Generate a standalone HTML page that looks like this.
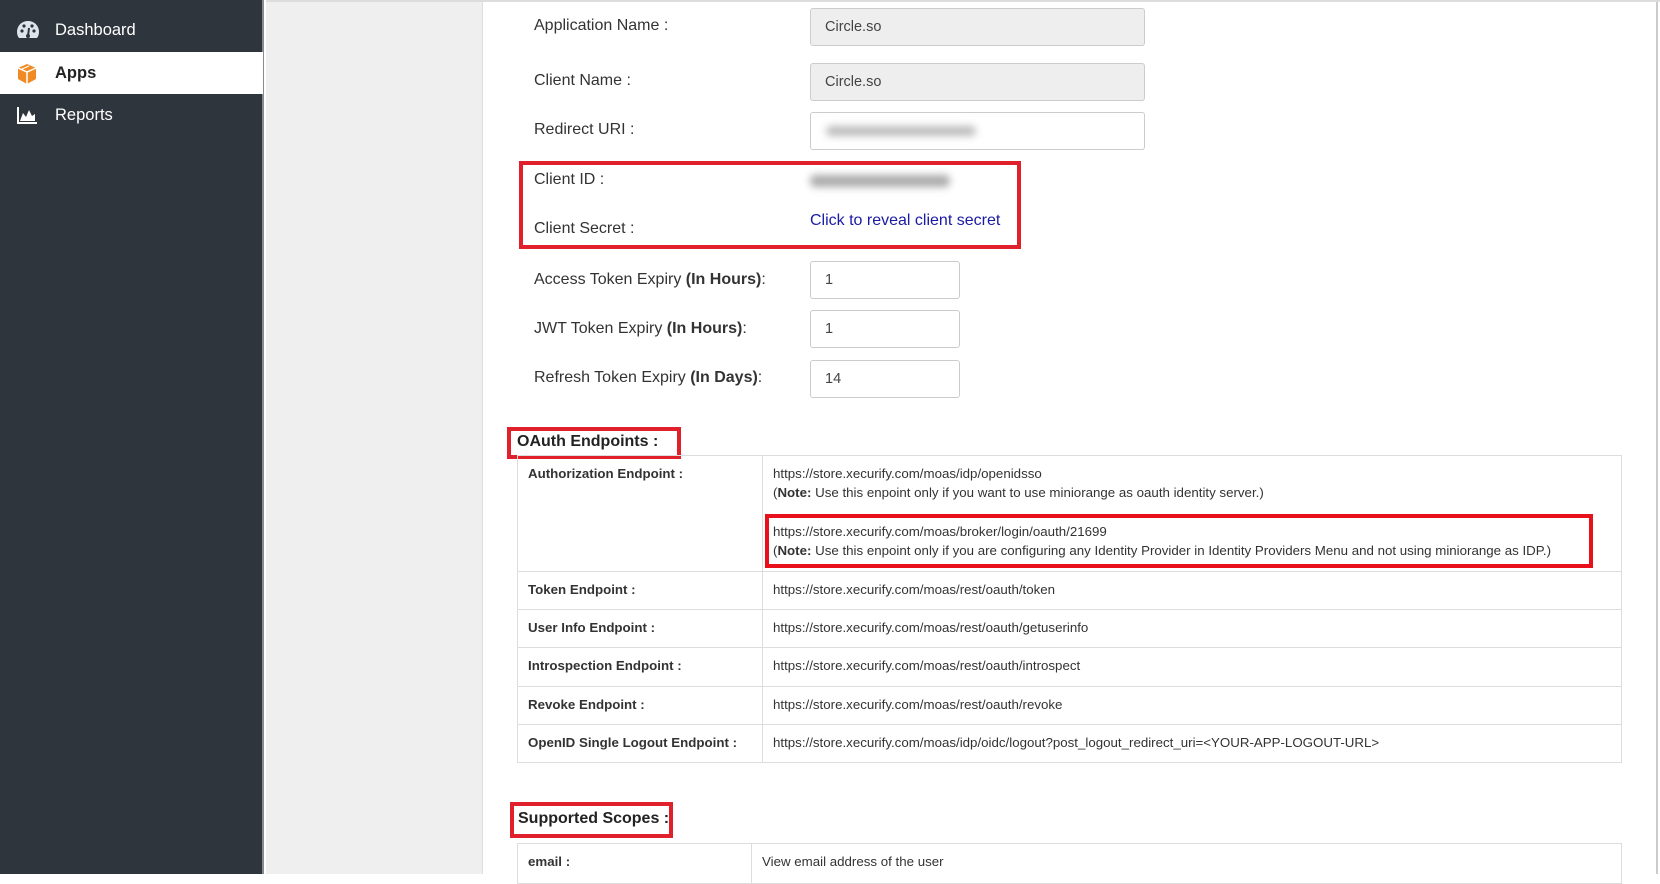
<!DOCTYPE html>
<html><head><meta charset="utf-8"><style>
*{margin:0;padding:0;box-sizing:border-box}
body{width:1660px;height:874px;overflow:hidden;font-family:"Liberation Sans",Arial,sans-serif;background:#fff;position:relative;color:#333}
.sb{position:absolute;left:0;top:0;width:264px;height:874px;background:#2f353c;border-right:2px solid #8a8d90}
.nav{position:absolute;left:0;width:263px;height:42px;color:#fff;font-size:16.5px;line-height:42px;padding-left:55px}
.nav.act{background:#fff;color:#222;font-weight:bold}
.nav svg{position:absolute;left:16px;top:11px}
.gray{position:absolute;left:266px;top:0;width:217px;height:874px;background:#efefef;border-right:1px solid #ddd}
.main{position:absolute;left:483px;top:0;width:1175px;height:874px;background:#fff;border-right:2px solid #ccc}
.topline{position:absolute;left:266px;top:0;width:1394px;height:2px;background:#ddd}
.lbl{position:absolute;left:534px;font-size:16px;color:#333}
.inp{position:absolute;left:810px;width:335px;height:38px;border:1px solid #ccc;border-radius:3px;font-size:14.5px;line-height:36px;padding-left:14px;color:#444}
.inp.ro{background:#eee}
.sm{width:150px}
.red{position:absolute;border:4px solid #e0212b}
.blur{position:absolute;background:#bbb;filter:blur(4px);height:10px;border-radius:5px}
table{position:absolute;border-collapse:collapse;font-size:13.3px;color:#333}
td{border:1px solid #ddd;vertical-align:top;padding:10px 10px 0 10px}
td.k{font-weight:bold;width:245px}
</style></head><body>
<div class="sb">
 <div class="nav" style="top:9px"><svg width="24" height="20" viewBox="0 0 24 20"><path d="M12 1C5.5 1 1 6 1 12c0 2.5.8 4.5 2 6h18c1.2-1.5 2-3.5 2-6 0-6-4.5-11-11-11z" fill="#dbe5ea"/><circle cx="6" cy="11" r="1.6" fill="#2f353c"/><circle cx="8" cy="6" r="1.6" fill="#2f353c"/><circle cx="16" cy="6" r="1.6" fill="#2f353c"/><circle cx="18" cy="11" r="1.6" fill="#2f353c"/><path d="M12 16l1-8" stroke="#2f353c" stroke-width="2"/><circle cx="12" cy="16" r="2" fill="#2f353c"/></svg>Dashboard</div>
 <div class="nav act" style="top:52px"><svg width="22" height="22" viewBox="0 0 22 22"><path d="M11 1l9 4v11l-9 5-9-5V5z" fill="#f08a24"/><path d="M2 5l9 4 9-4M11 9v12" stroke="#fff" stroke-width="1.5" fill="none"/><path d="M5 6.5l8-3.5" stroke="#fff" stroke-width="1.2"/></svg>Apps</div>
 <div class="nav" style="top:94px"><svg width="22" height="20" viewBox="0 0 22 20"><path d="M2 2v16h19" stroke="#fff" stroke-width="2" fill="none"/><path d="M4 16l3-8 3 4 3-7 3 6 3-2v7z" fill="#fff"/></svg>Reports</div>
</div>
<div class="gray"></div>
<div class="main"></div>
<div class="topline"></div>

<div class="lbl" style="top:17px">Application Name :</div>
<div class="inp ro" style="top:8px">Circle.so</div>
<div class="lbl" style="top:72px">Client Name :</div>
<div class="inp ro" style="top:63px">Circle.so</div>
<div class="lbl" style="top:121px">Redirect URI :</div>
<div class="inp" style="top:112px"></div>
<div class="blur" style="left:826px;top:126px;width:150px"></div>

<div class="red" style="left:519px;top:161px;width:502px;height:88px"></div>
<div class="lbl" style="top:171px">Client ID :</div>
<div class="blur" style="left:810px;top:175px;width:140px;height:12px;background:#aaa"></div>
<div class="lbl" style="top:220px">Client Secret :</div>
<div style="position:absolute;left:810px;top:212px;font-size:16px;color:#1a1aa6">Click to reveal client secret</div>

<div class="lbl" style="top:271px">Access Token Expiry <b>(In Hours)</b>:</div>
<div class="inp sm" style="top:261px">1</div>
<div class="lbl" style="top:320px">JWT Token Expiry <b>(In Hours)</b>:</div>
<div class="inp sm" style="top:310px">1</div>
<div class="lbl" style="top:369px">Refresh Token Expiry <b>(In Days)</b>:</div>
<div class="inp sm" style="top:360px">14</div>

<div class="red" style="left:507px;top:427px;width:174px;height:32px"></div>
<div style="position:absolute;left:517px;top:433px;font-size:16px;font-weight:bold;color:#222">OAuth Endpoints :</div>

<table style="left:517px;top:455px;width:1105px">
<tr style="height:116px"><td class="k">Authorization Endpoint :</td><td>https://store.xecurify.com/moas/idp/openidsso<br><span style="line-height:24px">(<b>Note:</b> Use this enpoint only if you want to use miniorange as oauth identity server.)</span><br><div style="margin-top:19px">https://store.xecurify.com/moas/broker/login/oauth/21699<br><span style="line-height:24px">(<b>Note:</b> Use this enpoint only if you are configuring any Identity Provider in Identity Providers Menu and not using miniorange as IDP.)</span></div></td></tr>
<tr style="height:38px"><td class="k">Token Endpoint :</td><td>https://store.xecurify.com/moas/rest/oauth/token</td></tr>
<tr style="height:38px"><td class="k">User Info Endpoint :</td><td>https://store.xecurify.com/moas/rest/oauth/getuserinfo</td></tr>
<tr style="height:39px"><td class="k">Introspection Endpoint :</td><td>https://store.xecurify.com/moas/rest/oauth/introspect</td></tr>
<tr style="height:38px"><td class="k">Revoke Endpoint :</td><td>https://store.xecurify.com/moas/rest/oauth/revoke</td></tr>
<tr style="height:38px"><td class="k">OpenID Single Logout Endpoint :</td><td>https://store.xecurify.com/moas/idp/oidc/logout?post_logout_redirect_uri=&lt;YOUR-APP-LOGOUT-URL&gt;</td></tr>
</table>
<div class="red" style="left:765px;top:514px;width:828px;height:54px;border-color:#e8101a"></div>

<div class="red" style="left:510px;top:802px;width:163px;height:36px"></div>
<div style="position:absolute;left:518px;top:810px;font-size:16px;font-weight:bold;color:#222">Supported Scopes :</div>
<table style="left:517px;top:843px;width:1105px">
<tr style="height:40px"><td class="k" style="width:234px">email :</td><td>View email address of the user</td></tr>
</table>
</body></html>
